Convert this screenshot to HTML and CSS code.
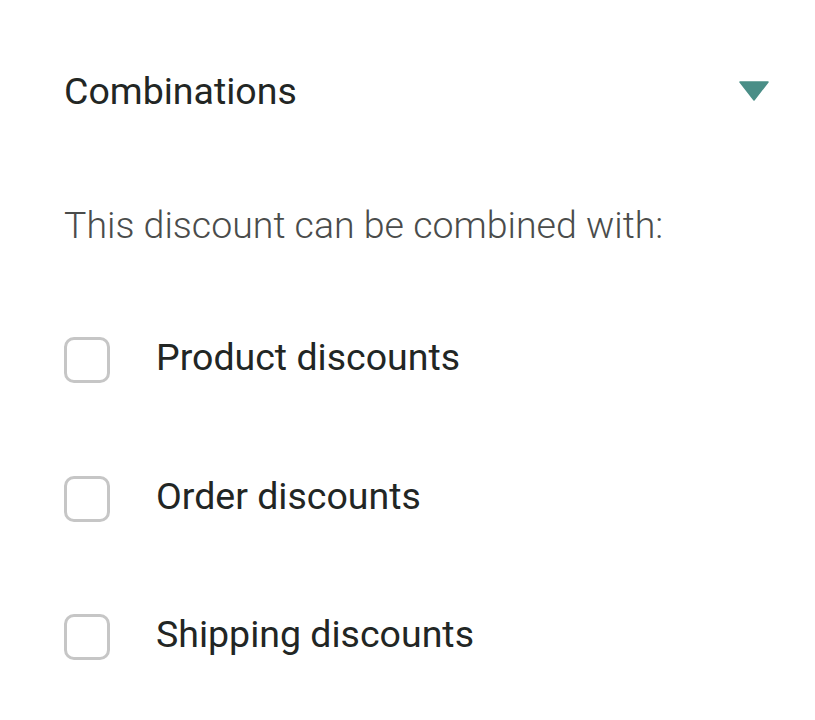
FILE: index.html
```html
<!DOCTYPE html>
<html>
<head>
<meta charset="utf-8">
<link rel="stylesheet" href="styles.css">
</head>
<body>
<div class="panel">
  <div class="header">
    <span class="title">Combinations</span>
    <svg class="caret" width="32" height="22" viewBox="0 0 32 22"><path d="M2 2 H30 L16 20 Z" fill="#4a8e87" stroke="#4a8e87" stroke-width="1.5" stroke-linejoin="round"/></svg>
  </div>
  <p class="desc">This discount can be combined with:</p>
  <ul class="options">
    <li class="option"><span class="box"></span><span class="label">Product discounts</span></li>
    <li class="option"><span class="box"></span><span class="label">Order discounts</span></li>
    <li class="option"><span class="box"></span><span class="label">Shipping discounts</span></li>
  </ul>
</div>
</body>
</html>
```
FILE: styles.css
```css
html, body { margin: 0; padding: 0; background: #ffffff; }
body { font-family: Roboto, "Noto Sans", sans-serif; }
.panel { padding: 68px 45px 0 64px; }
.header { display: flex; align-items: center; justify-content: space-between; height: 46px; }
.title { font-size: 37.5px; line-height: 46px; color: #222624; font-weight: 400; }
.caret { display: block; }
.desc { margin: 88px 0 0 0; font-size: 37.5px; line-height: 46px; font-weight: 300; color: #4a4c4b; }
.options { list-style: none; margin: 89px 0 0 0; padding: 0; display: flex; flex-direction: column; gap: 92.5px; }
.option { display: flex; align-items: center; height: 46px; }
.box { box-sizing: border-box; width: 46px; height: 46px; border: 3px solid #c6c6c6; border-radius: 10px; flex: none; }
.label { margin-left: 46px; padding-bottom: 6px; font-size: 37.5px; line-height: 46px; color: #222624; }
```
